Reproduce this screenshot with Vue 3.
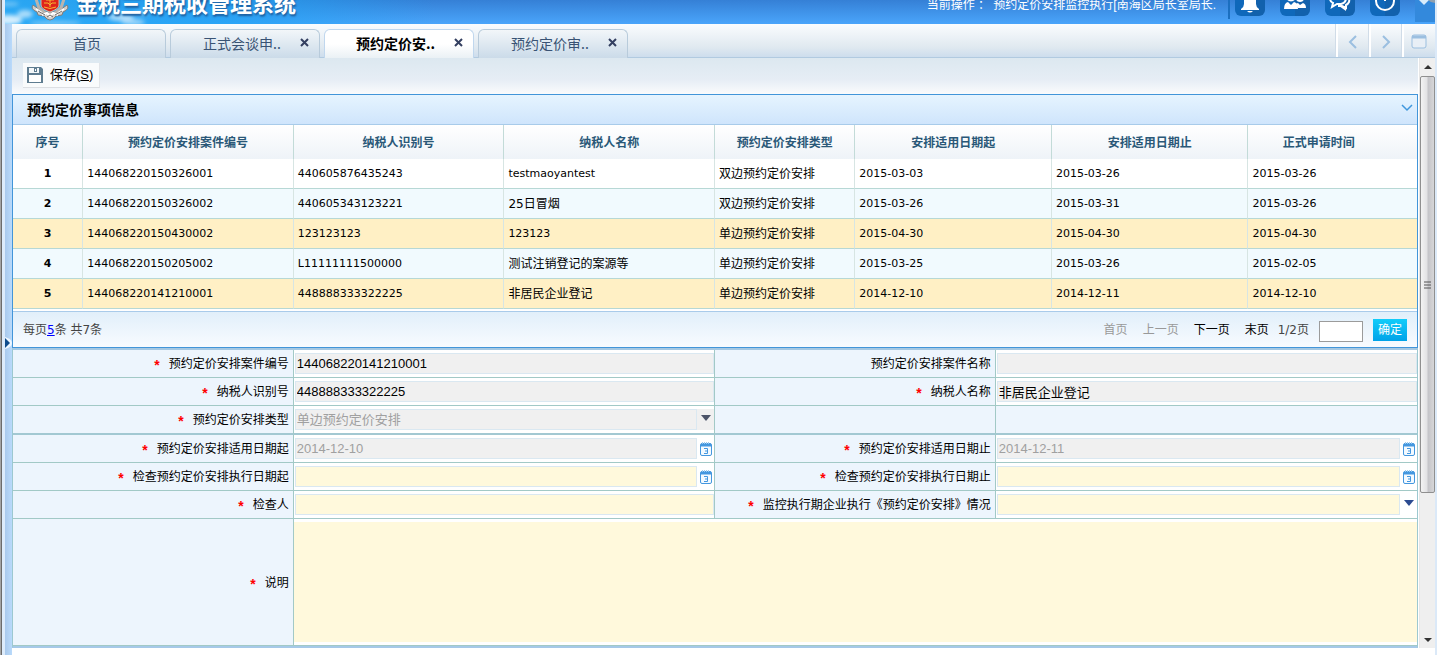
<script setup>
import { ref } from 'vue'

const tabs = [
  { title: '首页', closable: false },
  { title: '正式会谈申..', closable: true },
  { title: '预约定价安..', closable: true, active: true },
  { title: '预约定价审..', closable: true },
]

const columns = [
  { label: '序号', cls: 'c-no' },
  { label: '预约定价安排案件编号', cls: 'c-case' },
  { label: '纳税人识别号', cls: 'c-case' },
  { label: '纳税人名称', cls: 'c-case' },
  { label: '预约定价安排类型', cls: 'c-type' },
  { label: '安排适用日期起', cls: 'c-date' },
  { label: '安排适用日期止', cls: 'c-date' },
  { label: '正式申请时间', cls: 'c-last' },
]

const rows = [
  ['1', '144068220150326001', '440605876435243', 'testmaoyantest', '双边预约定价安排', '2015-03-03', '2015-03-26', '2015-03-26'],
  ['2', '144068220150326002', '440605343123221', '25日冒烟', '双边预约定价安排', '2015-03-26', '2015-03-31', '2015-03-26'],
  ['3', '144068220150430002', '123123123', '123123', '单边预约定价安排', '2015-04-30', '2015-04-30', '2015-04-30'],
  ['4', '144068220150205002', 'L11111111500000', '测试注销登记的案源等', '单边预约定价安排', '2015-03-25', '2015-03-26', '2015-02-05'],
  ['5', '144068220141210001', '448888333322225', '非居民企业登记', '单边预约定价安排', '2014-12-10', '2014-12-11', '2014-12-10'],
]
const rowClass = ['', 'alt', 'hit', 'alt', 'hit']

const form = ref({
  caseNo: '144068220141210001',
  caseName: '',
  taxId: '448888333322225',
  taxName: '非居民企业登记',
  type: '单边预约定价安排',
  applyFrom: '2014-12-10',
  applyTo: '2014-12-11',
  execFrom: '',
  execTo: '',
  checker: '',
  situation: '',
  note: '',
})

const fields = [
  { key: 'caseNo', label: '预约定价安排案件编号', required: true, kind: 'text', locked: true },
  { key: 'caseName', label: '预约定价安排案件名称', kind: 'text', locked: true },
  { key: 'taxId', label: '纳税人识别号', required: true, kind: 'text', locked: true },
  { key: 'taxName', label: '纳税人名称', required: true, kind: 'text', locked: true },
  { key: 'type', label: '预约定价安排类型', required: true, kind: 'select', disabled: true, thick: true },
  { key: 'blank', label: '', kind: 'blank', thick: true },
  { key: 'applyFrom', label: '预约定价安排适用日期起', required: true, kind: 'date', disabled: true },
  { key: 'applyTo', label: '预约定价安排适用日期止', required: true, kind: 'date', disabled: true },
  { key: 'execFrom', label: '检查预约定价安排执行日期起', required: true, kind: 'date' },
  { key: 'execTo', label: '检查预约定价安排执行日期止', required: true, kind: 'date' },
  { key: 'checker', label: '检查人', required: true, kind: 'text' },
  { key: 'situation', label: '监控执行期企业执行《预约定价安排》情况', required: true, kind: 'select' },
]
const isLatin = (s) => /^[\x20-\x7e]*$/.test(s)
</script>

<template>
  <div class="window">
    <div class="frame-edge"></div>
    <div class="main">
      <header class="banner">
        <svg class="clouds" width="300" height="24" viewBox="0 0 300 24" aria-hidden="true">
          <defs>
            <filter id="soft" x="-20%" y="-50%" width="140%" height="200%"><feGaussianBlur stdDeviation="2" /></filter>
          </defs>
          <g filter="url(#soft)" fill="#fff">
            <ellipse cx="4" cy="20" rx="13" ry="5" opacity=".8" />
            <ellipse cx="20" cy="14" rx="8" ry="4" opacity=".6" />
            <ellipse cx="4" cy="4" rx="10" ry="2" opacity=".35" />
            <ellipse cx="50" cy="23" rx="26" ry="2" opacity=".4" />
            <ellipse cx="116" cy="17" rx="13" ry="4" opacity=".6" />
            <ellipse cx="128" cy="22" rx="12" ry="3" opacity=".55" />
            <ellipse cx="136" cy="13" rx="8" ry="2" opacity=".4" />
          </g>
        </svg>
        <svg class="emblem" width="38" height="40" viewBox="0 0 38 40" aria-hidden="true">
          <path d="M2 24q-3 4 4 7l1 3 6 1 3 3 3 1 3-1 3-3 6-1 1-3q7-3 4-7l-7 5-5 2H14l-5-2z" fill="#d3d0cc" stroke="#827c78" />
          <path d="M5 18l3 9 6 5M33 18l-3 9-6 5" fill="none" stroke="#b9b4ae" stroke-width="3" />
          <path d="M5 28l6 4M11 34l5-2 3 3 3-3 5 2M33 28l-6 4" fill="none" stroke="#fff" stroke-width="2" />
          <path d="M7 30l7 4M31 30l-7 4M16 36l3-2 3 2" fill="none" stroke="#6f6965" />
          <path d="M10 8h18v16q0 4-9 7-9-3-9-7z" fill="#df231b" stroke="#c9bfae" />
          <path d="M13 22h4l2 2 2-2h4M13 26q6 3 12 0M15 19h8M19 18v8" fill="none" stroke="#f6b532" stroke-width="1" />
        </svg>
        <h1>金税三期税收管理系统</h1>
        <div class="operation">当前操作&nbsp;： 预约定价安排监控执行[南海区局长室局长.</div>
        <nav class="quick">
          <button type="button" aria-label="通知">
            <svg width="30" height="30" viewBox="0 0 30 30"><path d="M15 4q6 1 6 9v5q0 3 3 5v1H6v-1q3-2 3-5v-5q0-8 6-9z" fill="#fff" /><path d="M12 25q3 3 6 0z" fill="#fff" /></svg>
          </button>
          <button type="button" aria-label="用户">
            <svg width="30" height="30" viewBox="0 0 30 30" fill="#fff"><circle cx="20" cy="12" r="4" /><path d="M18 22l-3-4 3-1 2 2 3-2q3 1 3 5z" /><circle cx="11" cy="11" r="5" stroke="#1266b4" /><path d="M4 23q0-6 4-7l3 3 3-3q4 1 4 7z" /></svg>
          </button>
          <button type="button" aria-label="消息">
            <svg width="30" height="30" viewBox="0 0 30 30" fill="none" stroke="#fff" stroke-width="2"><path d="M9 7h7q5 0 5 5t-5 6h-4l-5 3 1-4q-3-1-3-5t4-5z" /><path d="M22 10q3 2 2 6-1 2-3 3v3l-4-2h-4" stroke-width="2" /><path d="M14 20h7v5z" fill="#fff" stroke="none" /></svg>
          </button>
          <button type="button" aria-label="退出">
            <svg width="30" height="30" viewBox="0 0 30 30" fill="none" stroke="#fff" stroke-width="2"><circle cx="15" cy="15" r="9" /><path d="M15 7v8" /></svg>
          </button>
        </nav>
        <button type="button" class="fold" aria-label="展开">
          <svg width="20" height="22" viewBox="0 0 20 22"><path d="M4 0h10l-5 5z" fill="#d8ecfb" /><path d="M13 0h7v3q-4 0-7-3z" fill="#8fa0b0" /></svg>
        </button>
      </header>

      <div class="body">
        <aside class="splitter">
          <svg width="7" height="14" viewBox="0 0 7 14" aria-hidden="true"><path d="M0 1q7 2 7 6t-7 6z" fill="#edf6ff" /><path d="M0 2l5 5-5 5z" fill="#0f4c8c" /></svg>
        </aside>
        <div class="workspace">
          <div class="tabbar">
            <div class="tabs">
              <div v-for="t in tabs" :key="t.title" class="tab" :class="{ active: t.active, plain: !t.closable }">
                <button type="button" class="tab-name">{{ t.title }}</button>
                <button v-if="t.closable" type="button" class="tab-close" aria-label="关闭">
                  <svg width="9" height="9" viewBox="0 0 9 9"><path d="M1 1l7 7M8 1l-7 7" stroke="#333f60" stroke-width="2" /></svg>
                </button>
              </div>
            </div>
            <div class="tabtools">
              <button type="button" aria-label="向左"><svg width="16" height="16" viewBox="0 0 16 16"><path d="M11 2L5 8l6 6" /></svg></button>
              <button type="button" aria-label="向右"><svg width="16" height="16" viewBox="0 0 16 16"><path d="M5 2l6 6-6 6" /></svg></button>
              <button type="button" aria-label="窗口"><svg width="16" height="16" viewBox="0 0 16 16"><rect x="1" y="1" width="14" height="13" rx="2" fill="#e8eff6" stroke-width="1" /><path d="M1 3h14" stroke-width="3" /></svg></button>
            </div>
          </div>

          <div class="content">
            <div class="page">
              <div class="toolbar">
                <button type="button" class="save">
                  <svg width="16" height="16" viewBox="0 0 16 16" aria-hidden="true"><path d="M0 0h14l2 2v14H0z" fill="#5e7c90" /><path d="M2 1h10v5H2z" fill="#f4f8fa" /><path d="M7 1h3v4H7z" fill="#5e7c90" /><path d="M8 2h1v2H8z" fill="#fff" /><path d="M2 8h12v7H2z" fill="#fff" /></svg>
                  <span>保存(<u>S</u>)</span>
                </button>
              </div>

              <section class="panel">
                <div class="panel-head">
                  <h2>预约定价事项信息</h2>
                  <button type="button" aria-label="收起"><svg width="12" height="8" viewBox="0 0 12 8"><path d="M1 1l5 5 5-5" fill="none" stroke="#3f97dd" stroke-width="1.500" /></svg></button>
                </div>
                <table class="grid">
                  <thead>
                    <tr><th v-for="c in columns" :key="c.label" :class="c.cls">{{ c.label }}</th></tr>
                  </thead>
                  <tbody>
                    <tr v-for="(r, i) in rows" :key="r[0]" :class="rowClass[i]">
                      <td v-for="(v, j) in r" :key="j" :class="{ no: j === 0, latin: isLatin(v) }">{{ v }}</td>
                    </tr>
                  </tbody>
                </table>
                <div class="pager">
                  <div class="total">每页<a href="#">5</a>条 共7条</div>
                  <div class="pages">
                    <button type="button" disabled>首页</button>
                    <button type="button" disabled>上一页</button>
                    <button type="button">下一页</button>
                    <button type="button">末页</button>
                    <span>1/2页</span>
                    <input type="text" aria-label="页码" />
                    <button type="button" class="go">确定</button>
                  </div>
                </div>
              </section>

              <form class="form" @submit.prevent>
                <template v-for="f in fields" :key="f.key">
                  <div class="label" :class="{ thick: f.thick }">
                    <label v-if="f.label" :for="f.key"><i v-if="f.required">*</i>{{ f.label }}</label>
                  </div>
                  <div class="cell" :class="[f.kind, { thick: f.thick, off: f.disabled }]">
                    <input v-if="f.kind === 'text'" :id="f.key" v-model="form[f.key]" type="text" :readonly="f.locked" />
                    <template v-if="f.kind === 'date'">
                      <input :id="f.key" v-model="form[f.key]" type="text" :disabled="f.disabled" />
                      <button type="button" aria-label="选择日期">
                        <svg width="12" height="14" viewBox="0 0 12 14"><rect x=".5" y="1.5" width="11" height="12" rx="1.5" fill="#f4faff" stroke="#4497df" /><path d="M1 3h10" stroke="#4497df" stroke-width="3" /><path d="M2 1h8" stroke="#9ccbf0" stroke-width="2" stroke-dasharray="1 1" /><path d="M4 6.500h3.500v5H4M5 9h2.500" fill="none" stroke="#4497df" /></svg>
                      </button>
                    </template>
                    <template v-if="f.kind === 'select'">
                      <select :id="f.key" v-model="form[f.key]" :disabled="f.disabled">
                        <option v-if="form[f.key]">{{ form[f.key] }}</option>
                      </select>
                      <span class="drop"><svg width="10" height="6" viewBox="0 0 10 6" aria-hidden="true"><path d="M0 0h10L5 6z" fill="currentColor" /></svg></span>
                    </template>
                  </div>
                </template>
                <div class="label"><label for="note"><i>*</i>说明</label></div>
                <div class="cell note"><textarea id="note" v-model="form.note"></textarea></div>
              </form>
            </div>

            <div class="scrollbar" aria-hidden="true">
              <svg class="arrow up" width="8" height="4" viewBox="0 0 8 4"><path d="M4 0l4 4H0z" fill="#333" /></svg>
              <div class="track"><div class="thumb"><svg width="7" height="8" viewBox="0 0 7 8"><path d="M0 1h7M0 4h7M0 7h7" stroke="#555" /></svg></div></div>
              <svg class="arrow down" width="8" height="4" viewBox="0 0 8 4"><path d="M0 0h8L4 4z" fill="#333" /></svg>
            </div>
          </div>
        </div>
      </div>
    </div>
  </div>
</template>

<style>
html, body { background: #fff; overflow: hidden; }
</style>

<style scoped>
* { box-sizing: border-box; }
.window {
  display: flex;
  min-height: 100vh;
  font: 12px/18px "DejaVu Sans", "Noto Sans CJK SC", sans-serif;
  color: #000;
}
button, input, select, textarea { font: inherit; color: inherit; margin: 0; padding: 0; border: 0; background: none; border-radius: 0; outline: 0; }
svg { display: block; }
.frame-edge { width: 5px; flex: none; background: linear-gradient(90deg, #a4a4a4 1px, #6b6b6b 1px 2px, #dcebfb 2px); }
.main { flex: 1; min-width: 0; display: flex; flex-direction: column; border-right: 2px solid #dbe9f8; }

.banner {
  position: relative;
  height: 24px;
  overflow: hidden;
  display: flex;
  align-items: flex-end;
  padding-left: 26px;
  background: linear-gradient(90deg, rgba(40, 170, 245, .9), rgba(30, 165, 245, .7) 220px, rgba(60, 150, 240, 0) 430px), linear-gradient(#3580d6, #4aa5fb);
  color: #fff;
}
.clouds { position: absolute; left: 0; top: 0; }
.emblem { position: relative; flex: none; margin-bottom: 3px; }
h1 { position: relative; flex: 1; margin: 0 0 8px 7px; font: bold 22px/28px "Noto Sans CJK SC", sans-serif; text-shadow: 1px 2px 2px #1c5c9c; white-space: nowrap; }
.operation { font-size: 12px; line-height: 18px; font-family: "Liberation Sans", "Noto Sans CJK SC", sans-serif; margin-bottom: 10px; padding-right: 12px; white-space: nowrap; }
.quick { display: flex; gap: 15px; padding: 0 15px 3px 5px; margin-bottom: 5px; border-left: 2px solid #1b6fc0; }
.quick button { width: 30px; height: 30px; border-radius: 6px; background: linear-gradient(90deg, #0f68ba 50%, #1261ac 50%); }
.fold { width: 20px; height: 22px; margin-bottom: 2px; background: #3389dc; }

.body { flex: 1; display: flex; }
.splitter { width: 7px; flex: none; display: flex; align-items: center; background: linear-gradient(90deg, #a9c9ec, #b9dafb); padding-top: 7px; }
.workspace { flex: 1; min-width: 0; display: flex; flex-direction: column; }

.tabbar { height: 34px; display: flex; justify-content: space-between; background: linear-gradient(#fafcfe, #e0e9f0 70%, #cddded); border-bottom: 1px solid #b1cae0; }
.tabs { display: flex; gap: 4px; padding: 5px 0 0 4px; }
.tab {
  width: 150px;
  height: 29px;
  display: flex;
  align-items: center;
  padding: 0 10px 0 32px;
  border: 1px solid #b8cbdb;
  border-bottom: 0;
  border-radius: 6px 6px 0 0;
  background: linear-gradient(#f2f6f9, #cbdbe9);
  color: #395374;
  font-size: 14px;
}
.tab.plain { padding: 0 8px 0 0; }
.tab-name { flex: 1; height: 28px; padding-bottom: 2px; text-align: left; font-family: "Noto Sans CJK SC", sans-serif; white-space: nowrap; }
.tab.plain .tab-name { text-align: center; }
.tab-close { width: 9px; height: 9px; margin-bottom: 3px; }
.tab.active { border-color: #c0d7ee; background: linear-gradient(#fff 50%, #eaf1f5); color: #000; font-weight: bold; padding-left: 31px; }
.tabtools { display: flex; }
.tabtools button { width: 33px; padding: 3px 10px 0 7px; border-left: 2px solid #fff; box-shadow: -1px 0 #d0dce8; }
.tabtools svg { fill: none; stroke: #9bbfe0; stroke-width: 2; }

.content { flex: 1; display: flex; background: #fff; }
.page { flex: 1; min-width: 0; padding-bottom: 7px; }
.toolbar { height: 36px; padding: 5px 11px 0; background: linear-gradient(#dce8f0, #e6edf5 60%, #fafbfc); }
.save { display: flex; align-items: center; gap: 7px; height: 25px; padding: 0 6px 1px 4px; background: #f9fbfc; border-right: 1px solid #e2e5e9; border-bottom: 1px solid #dcdfe3; font: 13px/18px "Liberation Sans", "Noto Sans CJK SC", sans-serif; }

.panel { border: 1px solid #4295d9; }
.panel-head { height: 30px; display: flex; align-items: center; justify-content: space-between; padding: 0 4px 2px 14px; background: linear-gradient(#e6f4ff, #cfe5fc); border-bottom: 1px solid #a8cbea; }
.panel-head button { padding-bottom: 2px; }
h2 { margin: 0; font: bold 14px/20px "Noto Sans CJK SC", sans-serif; }

.grid { width: 100%; table-layout: fixed; border-collapse: separate; border-spacing: 0; margin-bottom: 2px; }
.c-no { width: 5%; }
.c-case { width: 15%; }
.c-type { width: 10%; }
.c-date { width: 14%; }
.c-last { width: 12%; }
th, td { padding: 0 4px; border-right: 1px solid #c3dbd8; white-space: nowrap; overflow: hidden; }
td { border-right-color: #d7e5e3; }
th:last-child, td:last-child { border-right: 0; }
th { height: 34px; padding-top: 2px; font-weight: bold; color: #2a5878; background: linear-gradient(#fff, #eef3f8); }
th:last-child { padding-right: 32px; }
td { height: 30px; padding-top: 1px; border-bottom: 1px solid #b7d8d5; text-align: left; }
td.latin { font-size: 11px; }
td.no { text-align: center; font-weight: bold; }
.alt td { background: #f1fafe; }
.hit td { background: #fff0c5; }

.pager { height: 36px; display: flex; align-items: center; justify-content: space-between; padding: 0 10px; border-top: 1px solid #a9cbea; background: linear-gradient(#e1effa, #f8fbff); color: #444; }
.total a { color: #00f; }
.pages { display: flex; align-items: center; gap: 15px; color: #000; }
.pages button:disabled { color: #999; }
.pages span { margin-left: -6px; margin-right: -5px; color: #444; }
.pages input { width: 44px; height: 21px; border: 1px solid #9b9b9b; background: #fff; margin-top: 3px; margin-right: -5px; }
.pages .go { width: 34px; height: 22px; background: linear-gradient(#12cdfa, #00a2e8); color: #fff; }

.form { display: grid; grid-template-columns: 20fr 30fr 20fr 30fr; border: 1px solid #9cc8d0; border-top: 2px solid #a5c8e3; border-bottom: 2px solid #a5c9e8; }
.label, .cell { min-width: 0; min-height: 28px; border-bottom: 1px solid #a2c9c6; border-right: 1px solid #a2c9c6; }
.cell:nth-child(4n) { border-right: 0; }
.label { display: flex; align-items: center; justify-content: flex-end; padding: 1px 4px 0 0; background: #edf5fd; white-space: nowrap; }
.label label { display: flex; }
.label i { font: bold 14px/20px "Liberation Sans", sans-serif; height: 18px; color: #f00; margin-right: 9px; }
.cell { display: flex; padding: 3px 0 3px 1px; background: #fff; }
.thick { min-height: 29px; border-bottom: 2px solid #a2c8d2; }
.cell.blank { background: #edf5fd; }
.cell input, .cell select { flex: 1; min-width: 0; height: 21px; padding: 0 1px; border: 1px solid #dae8f1; background: #fff9dc; appearance: none; font: 13px/18px "Liberation Sans", "Noto Sans CJK SC", sans-serif; opacity: 1; }
.cell input:read-only, .cell input:disabled, .cell select:disabled { background: #f0f0f0; }
.cell input:disabled, .cell select:disabled { color: #a0a0a0; }
.cell button { width: 17px; padding-left: 3px; }
.drop { width: 17px; height: 21px; padding: 6px 0 0 4px; color: #2c4b91; }
.off .drop { background: #f0f0f0; color: #4c5468; }
.cell.note { grid-column: 2 / 5; padding: 3px 0; border-right: 0; }
.cell.note textarea { display: block; width: 100%; height: 120px; background: #fff9dc; resize: none; }

.scrollbar { width: 17px; flex: none; display: flex; flex-direction: column; align-items: center; padding-left: 2px; margin-bottom: 7px; background: linear-gradient(90deg, #fff 1px, #e6e6e6 1px 2px, #efefef 2px); }
.track { flex: 1; width: 100%; }
.thumb { height: 75%; display: flex; align-items: center; justify-content: center; border: 1px solid #8f8f8f; border-radius: 2px; background: linear-gradient(90deg, #f3f3f3, #e2e2e4 45%, #c4c4c8 55%, #d6d6d8); }
.arrow { margin: 7px 0; }
.arrow.down { margin: 6px 0; }
</style>
